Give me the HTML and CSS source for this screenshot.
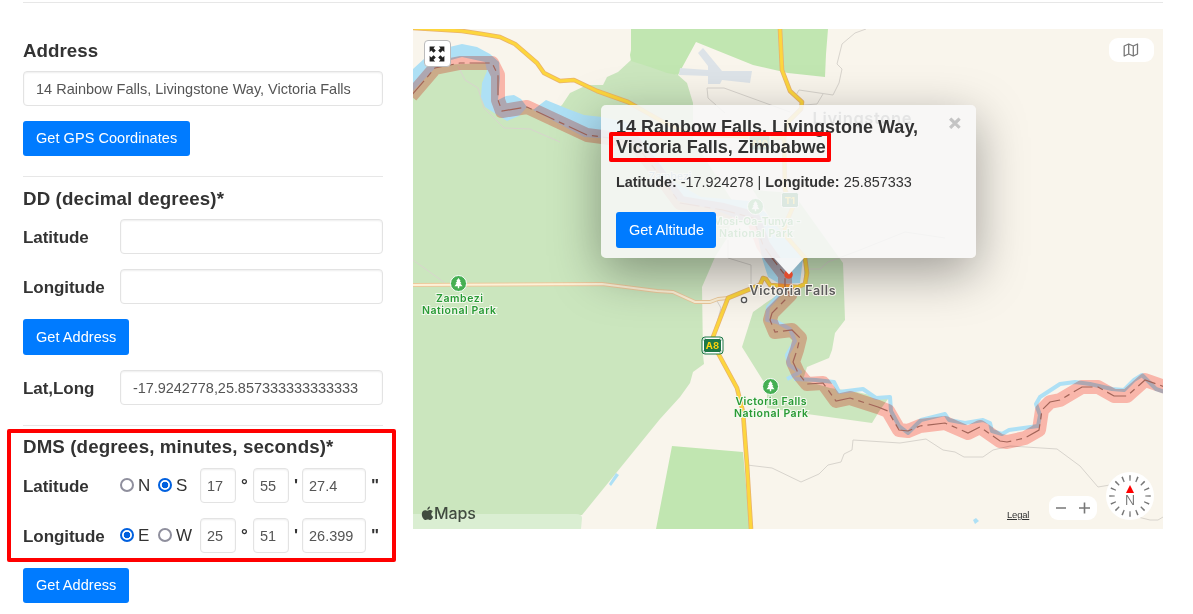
FILE: index.html
```html
<!DOCTYPE html>
<html lang="en">
<head>
<meta charset="utf-8">
<title>GPS Coordinates</title>
<link rel="stylesheet" href="styles.css">
</head>
<body>
<main class="page">
<hr class="rule">
<div class="columns">
<form class="finder">
  <h3 class="heading first">Address</h3>
  <div class="field wide">14 Rainbow Falls, Livingstone Way, Victoria Falls</div>
  <button type="button" class="btn">Get GPS Coordinates</button>
  <hr class="rule sep">
  <h3 class="heading">DD (decimal degrees)*</h3>
  <div class="row"><label class="label">Latitude</label><div class="field grow"></div></div>
  <div class="row"><label class="label">Longitude</label><div class="field grow"></div></div>
  <button type="button" class="btn tall">Get Address</button>
  <div class="row"><label class="label">Lat,Long</label><div class="field grow long">-17.9242778,25.857333333333333</div></div>
  <hr class="rule sep">
  <section class="dms">
    <h3 class="heading dms-title">DMS (degrees, minutes, seconds)*</h3>
    <div class="row"><label class="label">Latitude</label>
      <label class="pick"><input type="radio" name="lat" class="radio">N</label>
      <label class="pick second"><input type="radio" name="lat" class="radio" checked>S</label>
      <div class="field small">17</div><b class="unit deg">°</b><div class="field small">55</div><b class="unit min">'</b><div class="field sec">27.4</div><b class="unit">"</b></div>
    <div class="row"><label class="label">Longitude</label>
      <label class="pick"><input type="radio" name="lng" class="radio" checked>E</label>
      <label class="pick second"><input type="radio" name="lng" class="radio">W</label>
      <div class="field small">25</div><b class="unit deg">°</b><div class="field small">51</div><b class="unit min">'</b><div class="field sec">26.399</div><b class="unit">"</b></div>
    <div class="mark mark-dms"></div>
  </section>
  <button type="button" class="btn">Get Address</button>
</form>
<div class="map">
<svg class="canvas" viewBox="413 29 750 500">
  <defs>
    <g id="park-pin"><circle r="8" fill="#45af53" stroke="#fff" stroke-width="1"/><path d="M0-5.5 2.2-2.5H1.3L3-.2H1.8L4 2.8H.7V4.8H-.7V2.8H-4L-1.8-.2H-3L-1.3-2.5H-2.2Z" fill="#fff"/></g>
    <path id="main-road" d="M780 29 782 70 790 91 802 102 801 109 788 122 784 138 785 190 793 207 785 225 785 235 805 258 807 273 805 284 798 287 770 285 766 279 763 278 760 285 728 298 713 337 712 345 718 353 737 388 743 412 747 465 751 529"/>
    <path id="north-road" d="M413 28 462 31 482 34 500 37 515 44 537 63 544 73 560 81 574 80 597 91 628 102 665 123 690 134 784 138"/>
    <path id="side-road" d="M413 285 602 284 657 291 673 292 695 302 710 302 718 299 728 298"/>
    <path id="border" d="M411 96 435 68 460 63 492 63 498 75 498 100 502 111 527 107 587 135 633 141 657 172 680 203 723 210 753 218 763 245 772 258 785 275 785 287 790 295 772 313 770 320 775 332 792 330 800 338 797 350 793 362 798 373 807 384 823 383 836 401 850 398 878 407 888 411 899 430 908 431 920 426 945 423 968 433 980 427 1000 441 1007 442 1025 438 1039 430 1042 410 1050 402 1060 400 1082 387 1098 387 1114 396 1127 396 1145 380 1165 387"/>
  </defs>
  <rect x="413" y="29" width="750" height="500" fill="#f9f5ec"/>
  <path fill="#cbe6be" d="M413 90 435 65 492 63 500 111 527 107 550 115 562 105 570 93 587 85 603 85 607 77 618 72 631 60 678 75 687 83 693 103 693 140 735 205 727 238 715 257 702 287 703 355 704 364 693 372 690 383 680 397 660 419 582 515 413 515Z"/>
  <path fill="#daeed2" d="M413 514H576Q582 514 582 518L581 529H413Z"/>
  <path fill="#c1e6b1" d="M631 29H828L826 54 825 77 788 73 753 65 696 42 678 75 667 73 650 67 631 61 630 55 631 50ZM672 446 743 452 750 529H656Z"/>
  <path fill="#dde3e8" d="M680 68 708 70V66L698 53 703 48 722 71 752 71 750 83 722 80 720 84H708V76L679 75Z"/>
  <path fill="#cbe6be" d="M753 190 793 193 843 263 845 320 835 333 832 350 829 358 807 367 803 380 830 388 857 392 888 399 880 410 872 423 807 414 767 408V387L742 347 753 312 767 302 785 290 804 285 804 263 780 235Z"/>
  <g fill="none" stroke="#d8d4cd" stroke-width="1">
    <path d="M866 29 855 33 842 44 837 64 842 69 839 83 833 95 799 90 795 97M823 94 817 104 804 105M725 113 708 98 707 88H724L790 112M458 66 465 80 478 88 484 108 504 128 530 129 560 142M413 260 445 283M728 240 728 258 751 265V288M807 269H820L828 262 860 250 905 232 945 238M747 465 772 468 801 482 819 474 828 465 841 462 844 454 852 450 853 440 900 443 926 439 943 450 955 452 964 457H983L993 450 1010 446 1057 449 1080 466 1098 487 1110 485M1138 517 1150 520H1158L1163 517M717 301 721 308 713 337"/>
  </g>
  <path fill="#aee0f5" d="M413 69 425 58 437 50 462 44 477 47 490 54 499 62 500 78 498 100 506 96 514 95 521 99 527 107 519 116 507 121 496 114 485 107 481 97 482 83 487 71 485 62 462 57 440 63 413 91Z"/>
  <path fill="#aee0f5" d="M533 110 546 100 568 109 584 115 602 117 625 122 644 135 671 180 701 197 750 201 765 212 790 242 803 258 800 283 780 284 768 277 762 258 756 226 715 210 678 201 648 154 625 140 584 137Z"/>
  <path fill="none" stroke="#aee0f5" stroke-width="4" stroke-linejoin="round" d="M787 286 768 307 767 320 777 322 790 329 795 341 787 355 789 365 800 372 787 379M794 379 816 380 834 382 839 392 863 389 876 398 890 397 891 411 899 426 908 433 921 420 945 414 949 420 965 423 983 420 990 423 992 431 1002 434 1009 430 1038 426 1040 415 1036 404 1040 397 1060 384 1075 382 1090 384 1112 389 1124 390 1134 380 1142 375 1156 389 1165 392"/>
  <path d="M973 520 976 518 979 521 975 524ZM609 484 616 473 619 475 611 486Z" fill="#aee0f5"/>
  <g fill="none" stroke-linejoin="round">
    <use href="#side-road" stroke="#ecc99c" stroke-width="4"/>
    <use href="#side-road" stroke="#fdf1d7" stroke-width="2"/>
    <g stroke="#e9b36b" stroke-width="4.6"><use href="#north-road"/><use href="#main-road"/></g>
    <g stroke="#fdd63d" stroke-width="3"><use href="#north-road"/><use href="#main-road"/></g>
  </g>
  <use href="#border" class="band"/>
  <use href="#border" fill="none" stroke="#a26458" stroke-width="1.2" stroke-dasharray="20 5 6 5"/>
  <use href="#park-pin" x="458.5" y="283.5"/><use href="#park-pin" x="770.5" y="386.5"/><use href="#park-pin" x="755.5" y="206.5"/>
  <g class="park-name">
    <text x="459.5" y="301.5" textLength="47">Zambezi</text><text x="459" y="313.5" textLength="74">National Park</text>
    <text x="771" y="404.5" textLength="71">Victoria Falls</text><text x="771" y="416.5" textLength="74">National Park</text>
    <text x="757" y="224.5" textLength="88">Mosi-Oa-Tunya -</text><text x="756" y="236.5" textLength="74">National Park</text>
    <text x="670" y="180" class="river-name">Zambezi</text>
  </g>
  <text x="862" y="124" class="town" font-size="16.5" textLength="99">Livingstone</text>
  <circle cx="744" cy="300" r="2.6" fill="#fff" stroke="#555" stroke-width="1.3"/>
  <rect x="702.5" y="337.5" width="20" height="16" rx="3" fill="#1e7847" stroke="#fff" stroke-width="1"/><rect x="702" y="337" width="21" height="17" rx="3" fill="none" stroke="#1e7847"/><rect x="703.5" y="338.5" width="18" height="14" rx="2" fill="none" stroke="#fff"/>
  <text x="712.5" y="349" class="badge">A8</text>
  <rect x="781.5" y="192.5" width="17" height="15" rx="2" fill="#1e7847" stroke="#fff"/><text x="790" y="204" class="badge">T1</text>
  <rect x="749" y="135" width="21" height="15" rx="2" fill="#1e7847" stroke="#fff"/><text x="759.5" y="147" class="badge">A10</text>
</svg>
<div class="popup">
  <span class="close">×</span>
  <h4 class="place">14 Rainbow Falls, Livingstone Way, Victoria Falls, Zimbabwe</h4>
  <p class="coords"><b>Latitude:</b> -17.924278 | <b>Longitude:</b> 25.857333</p>
  <button type="button" class="btn altitude">Get Altitude</button>
</div>
<svg class="pointer" viewBox="773 258 34 40">
  <circle cx="788.5" cy="274.5" r="4.3" fill="#e04b2d"/><path d="M774 258H804L789 274.5Z" fill="#f3f5f6"/>
</svg>
<svg class="town-layer" viewBox="0 0 100 20"><text x="44.5" y="14.5" class="town" font-size="12.5" textLength="86">Victoria Falls</text></svg>
<div class="mark mark-place"></div>
<div class="control expand"><svg viewBox="0 0 26 26" width="26" height="26" fill="#222"><path d="M5 5H11L9.2 6.8 11.7 9.3 9.3 11.7 6.8 9.2 5 11ZM21 5V11L19.2 9.2 16.7 11.7 14.3 9.3 16.8 6.8 15 5ZM5 21V15L6.8 16.8 9.3 14.3 11.7 16.7 9.2 19.2 11 21ZM21 21H15L16.8 19.2 14.3 16.7 16.7 14.3 19.2 16.8 21 15Z"/></svg></div>
<div class="control type"><svg width="16" height="14" viewBox="0 0 16 14" fill="none" stroke="#777" stroke-width="1.3" stroke-linejoin="round"><path d="M1.2 3 5.7 1 10.3 3 14.5 1V11L10.3 13 5.7 11 1.2 13ZM5.7 1V11M10.3 3V13"/></svg></div>
<div class="brand"><svg width="13" height="15" viewBox="0 0 13 15" fill="#414b40"><path d="M9 .5C9 2.3 7.8 3.7 6.3 3.7 6.2 2 7.5.7 9 .5ZM6.5 4.8C7.3 4.8 8 4.1 9.2 4.1 10.3 4.1 11.2 4.7 11.8 5.5 9.5 6.9 10 9.8 12.2 10.7 11.5 12.5 10.4 14 9.2 14 8.3 14 7.9 13.5 6.8 13.5S5.2 14 4.3 14C2.6 14 .8 10.8.8 8.3.8 5.7 2.4 4.2 4.1 4.2 5.1 4.2 5.9 4.8 6.5 4.8Z"/></svg><span>Maps</span></div>
<a class="legal">Legal</a>
<div class="control scale"><svg width="48" height="24" viewBox="0 0 48 24" stroke="#777" stroke-width="1.6"><path d="M7 12H17M30 12H41M35.5 6.5V17.5"/></svg></div>
<svg class="compass" viewBox="-24 -24 48 48"><circle r="24" fill="#fff"/><circle r="18" fill="none" stroke="#777" stroke-width="5.5" pathLength="160" stroke-dasharray="2 8" stroke-dashoffset="1"/><path d="M0-11 4-3H-4Z" fill="#f00"/><text y="9" text-anchor="middle">N</text></svg>
</div>
</div>
</main>
</body>
</html>
```
FILE: styles.css
```css
* { box-sizing: border-box; }
body { margin: 0; background: #fff; color: #333; font-family: "Liberation Sans", Arial, sans-serif; }
.page { height: 614px; padding: 2px 30px 0 23px; overflow: hidden; }
.rule { height: 1px; margin: 0; border: 0; background: #e7e7e7; }
.columns { display: flex; gap: 30px; padding-top: 26px; }
.finder { width: 360px; flex: none; display: flex; flex-direction: column; align-items: flex-start; }
.heading { margin: 0; height: 42px; font-size: 18.72px; line-height: 43px; letter-spacing: .12px; white-space: nowrap; }
.heading.first { letter-spacing: .05px; }
.dms-title { line-height: 41px; }
.sep { width: 360px; margin-top: 20px; }
.field { height: 35px; border: 1px solid #e3e3e3; border-radius: 4px; background: #fff; box-shadow: inset 0 1px 2px rgba(0,0,0,.07); color: #555; font-size: 14.5px; line-height: 34px; padding: 0 12px; white-space: nowrap; overflow: hidden; }
.wide { width: 360px; }
.grow { flex: 1; }
.long { letter-spacing: -.05px; }
.btn { height: 35px; margin-top: 15px; padding: 0 13px; border: 0; border-radius: 3px; background: #007bff; color: #fff; font: 14.5px/35px "Liberation Sans", Arial, sans-serif; letter-spacing: .05px; white-space: nowrap; }
.btn.tall { height: 36px; }
.row { display: flex; width: 360px; height: 35px; margin-top: 15px; }
.heading + .row { margin-top: 0; }
.label { flex: none; width: 97px; font-size: 17px; font-weight: bold; line-height: 38px; letter-spacing: -.05px; }
.dms { position: relative; }
.pick { display: flex; align-items: center; gap: 4px; width: 38px; height: 36px; font-size: 17px; }
.pick.second { width: 42px; }
.radio { appearance: none; flex: none; width: 14px; height: 14px; margin: 0 0 2px; border: 2px solid #8f8f9d; border-radius: 50%; background: #fff; }
.radio:checked { border-color: #0060df; background: radial-gradient(circle, #0060df 0 3px, #fff 3.6px); }
.small { flex: none; width: 36px; padding: 0 6px; }
.sec { flex: none; width: 64px; padding: 0 6px; }
.unit { font-size: 17px; line-height: 36px; padding-left: 5px; }
.deg { width: 17px; padding-left: 5px; }
.min { width: 13px; }
.mark { position: absolute; border: 4px solid #f00; border-radius: 2px; }
.mark-dms { left: -16px; top: 3px; width: 389px; height: 133px; }

.map { position: relative; width: 750px; height: 500px; overflow: hidden; }
.canvas { display: block; width: 750px; height: 500px; }
.band { fill: none; stroke: #ffbeb8; stroke-width: 14; stroke-linejoin: round; mix-blend-mode: multiply; }
.park-name { font: 600 10.5px Inter, sans-serif; fill: #299a35; stroke: #f4faef; stroke-width: 2px; paint-order: stroke; text-anchor: middle; }
.river-name { fill: #6b9ac2; font-weight: 400; }
.town { font-family: Inter, sans-serif; font-weight: 600; fill: #5a5a5a; stroke: #f6f2eb; stroke-width: 2px; paint-order: stroke; text-anchor: middle; }
.badge { font: bold 9.5px Inter, sans-serif; fill: #ffd50b; text-anchor: middle; }
.popup { position: absolute; left: 188px; top: 76px; width: 375px; height: 153px; padding: 12px 15px; border-radius: 5px; background: rgba(247,247,247,.88); box-shadow: 0 15px 50px rgba(0,0,0,.36); }
.close { position: absolute; right: 15px; top: 6px; color: #c4c4c4; font-size: 21px; line-height: 24px; font-weight: bold; -webkit-text-stroke: .8px #c4c4c4; }
.place { margin: 0; width: 310px; font-size: 18px; line-height: 20px; }
.coords { margin: 15px 0 20px; font-size: 14.4px; line-height: 20px; white-space: nowrap; }
.altitude { display: block; height: 36px; margin: 0; padding-right: 12px; letter-spacing: 0; }
.pointer { position: absolute; left: 360px; top: 229px; width: 34px; height: 40px; }
.town-layer { position: absolute; left: 335px; top: 251px; width: 100px; height: 20px; overflow: visible; }
.mark-place { left: 196px; top: 103px; width: 222px; height: 30px; }
.control { position: absolute; display: flex; align-items: center; justify-content: center; background: #fff; border-radius: 9px; }
.expand { left: 11px; top: 11px; width: 27px; height: 27px; padding-right: 1px; border: 1px solid #bbb; border-radius: 4px; }
.type { right: 9px; top: 9px; width: 45px; height: 24px; padding-right: 2px; }
.scale { right: 66px; bottom: 9px; width: 48px; height: 24px; }
.brand { position: absolute; left: 8px; bottom: 6px; display: flex; align-items: center; color: #414b40; font: 500 16px/20px Inter, sans-serif; letter-spacing: -.1px; }
.legal { position: absolute; left: 594px; top: 480px; color: #333; font-size: 9.5px; line-height: 12px; letter-spacing: -.2px; text-decoration: underline; }
.compass { position: absolute; right: 9px; bottom: 9px; width: 48px; height: 48px; }
.compass text { font: 14px "Open Sans", sans-serif; fill: #777; }
```
